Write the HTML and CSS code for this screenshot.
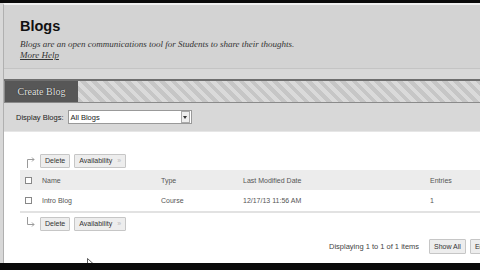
FILE: index.html
```html
<!DOCTYPE html>
<html>
<head>
<meta charset="utf-8">
<link rel="stylesheet" href="styles.css">
</head>
<body>
<div class="topbar"></div>
<div class="frame">
  <div class="header">
    <h1 class="title">Blogs</h1>
    <p class="desc">Blogs are an open communications tool for Students to share their thoughts.</p>
    <a class="help">More Help</a>
  </div>
  <div class="actionbar">
    <div class="create">Create Blog</div>
    <div class="stripes"></div>
  </div>
  <div class="filter">
    <span class="flabel">Display Blogs:</span>
    <div class="select"><span>All Blogs</span><span class="arrow"><svg width="4" height="3" viewBox="0 0 4 3"><path d="M0 0H4L2 3Z" fill="#333"/></svg></span></div>
  </div>
  <div class="content">
    <div class="btnrow top">
      <svg class="hook" width="12" height="14" viewBox="0 0 12 14"><path d="M3.5 14V5.5H10M8 3.5L10 5.5L8 7.5" fill="none" stroke="#9a9a9a" stroke-width="1"/></svg>
      <span class="btn">Delete</span>
      <span class="btn avail">Availability <span class="chev">&raquo;</span></span>
    </div>
    <div class="table">
      <div class="row head">
        <span class="c-chk"><span class="box"></span></span>
        <span class="c-name">Name</span>
        <span class="c-type">Type</span>
        <span class="c-date">Last Modified Date</span>
        <span class="c-ent">Entries</span>
      </div>
      <div class="row body">
        <span class="c-chk"><span class="box"></span></span>
        <span class="c-name">Intro Blog</span>
        <span class="c-type">Course</span>
        <span class="c-date">12/17/13 11:56 AM</span>
        <span class="c-ent">1</span>
      </div>
    </div>
    <div class="btnrow bottom">
      <svg class="hook" width="12" height="14" viewBox="0 0 12 14"><path d="M3.5 0V7.5H10M8 5.5L10 7.5L8 9.5" fill="none" stroke="#9a9a9a" stroke-width="1"/></svg>
      <span class="btn">Delete</span>
      <span class="btn avail">Availability <span class="chev">&raquo;</span></span>
    </div>
    <div class="pager">
      <span class="count">Displaying 1 to 1 of 1 items</span>
      <span class="btn pbtn">Show All</span>
      <span class="btn pbtn">Edit Paging...</span>
    </div>
  </div>
</div>
<svg class="cursor" width="8" height="12" viewBox="0 0 8 12"><path d="M0.5 0.5 L0.5 9 L2.5 7 L4 10.5 L5.5 9.8 L4 6.5 L7 6.5 Z" fill="#fff" stroke="#333" stroke-width="0.8"/></svg>
<div class="botbar"></div>
</body>
</html>
```
FILE: styles.css
```css
html, body { margin: 0; padding: 0; }
body {
  width: 480px; height: 270px; overflow: hidden; position: relative;
  background: #d8d8d8;
  font-family: "Liberation Sans", Arial, sans-serif;
  color: #333;
}
.topbar { height: 3px; background: #0a0a0a; }
.botbar { position: absolute; left: 0; right: 0; bottom: 0; height: 7px; background: #0a0a0a; }
.frame {
  margin-left: 3px;
  border-left: 1px solid #b0b0b0;
  border-top: 2px solid #f0f0f0;
  height: 258px;
  display: flex; flex-direction: column;
  overflow: hidden;
}
.header {
  background: #d3d3d3;
  padding: 11px 0 0 16px;
  height: 64px;
  box-sizing: border-box;
  border-bottom: 1px solid #c4c4c4;
}
.title { margin: 0; font-size: 14.5px; font-weight: bold; color: #111; line-height: 20px; }
.desc {
  margin: 3px 0 0; font-family: "Liberation Serif", serif; font-style: italic;
  font-size: 9px; color: #333; line-height: 11px;
}
.help {
  display: block; width: max-content; font-family: "Liberation Serif", serif; font-style: italic;
  font-size: 9px; color: #333; text-decoration: underline; line-height: 11px;
}
.actionbar {
  margin-top: 10px;
  height: 21px;
  display: flex;
  border-top: 2px solid #6e6e6e;
  border-bottom: 1px solid #8a8a8a;
}
.create {
  width: 73px; background: #575757; color: #e6e6e6;
  border-left: 1px solid #8a8a8a;
  font-family: "Liberation Serif", serif; font-size: 10px;
  display: flex; align-items: center; justify-content: center;
  text-shadow: 0 0 1px #000;
}
.stripes {
  flex: 1;
  background: repeating-linear-gradient(45deg, #c6c6c6 0 4px, #dadada 4px 8px);
}
.filter {
  height: 28px; display: flex; align-items: center; padding-left: 12px;
  border-bottom: 1px solid #e6e6e6;
}
.flabel { font-size: 7.5px; color: #222; margin-right: 4px; }
.select {
  width: 120px; height: 12px; background: #fff; border: 1px solid #999;
  display: flex; justify-content: space-between; align-items: center;
  font-size: 7.5px; color: #222; padding-left: 2px; box-sizing: content-box;
}
.arrow {
  width: 7px; height: 10px; border: 1px solid #aaa; background: #eee;
  display: flex; align-items: center; justify-content: center; margin-right: 1px;
}
.content { flex: 1; background: #fff; padding-top: 22px; }
.btnrow { display: flex; align-items: center; padding-left: 20px; height: 14px; gap: 4px; }
.hook { flex: none; margin-right: 0; }
.btn {
  font-size: 7px; color: #333; background: #ededed; border: 1px solid #c6c6c6;
  height: 12px; line-height: 12px; padding: 0 4px; border-radius: 1px;
}
.chev { color: #bbb; margin-left: 3px; }
.table { margin: 2px 0 0 16px; border-bottom: 2px solid #e2e2e2; }
.row { display: flex; align-items: center; font-size: 7px; color: #555; }
.row.head { background: #ececec; height: 20px; }
.row.body { height: 21px; }
.c-chk { width: 22px; padding-left: 5px; box-sizing: border-box; display: flex; }
.box { width: 5px; height: 5px; border: 1px solid #888; background: #fff; }
.c-name { width: 119px; }
.c-type { width: 82px; }
.c-date { width: 187px; }
.c-ent { flex: 1; }
.btnrow.bottom { margin-top: 4px; }
.pager { display: flex; align-items: center; margin-top: 8px; padding-left: 325px; white-space: nowrap; }
.count { font-size: 7.5px; color: #444; margin-right: 10px; }
.pbtn { height: 13px; line-height: 13px; margin-right: 4px; flex: none; }
.cursor { position: absolute; left: 87px; top: 258px; }
```
